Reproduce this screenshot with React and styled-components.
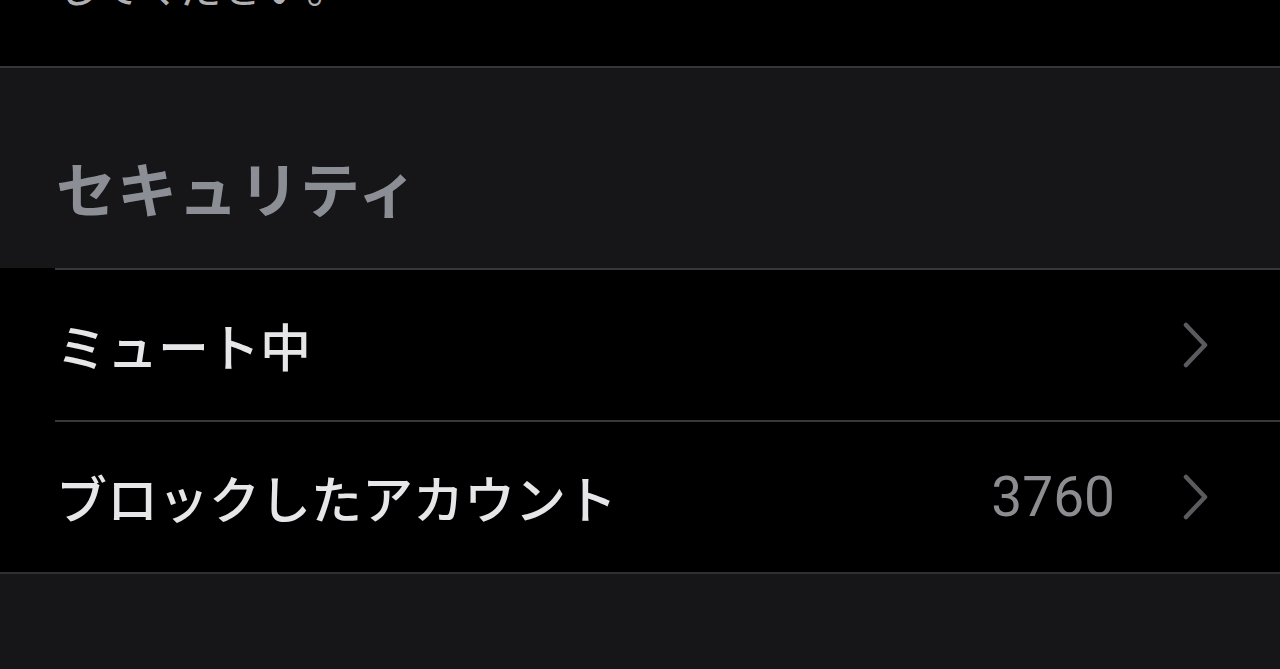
import React from "react";
import styled, { createGlobalStyle } from "styled-components";

const GlobalStyle = createGlobalStyle`
  html, body {
    margin: 0;
    padding: 0;
    background: #161618;
  }
  body {
    font-family: "Noto Sans CJK JP", "Noto Sans", sans-serif;
    -webkit-font-smoothing: antialiased;
  }
`;

const Page = styled.div`
  width: 1280px;
  height: 669px;
  overflow: hidden;
  background: #161618;
  display: flex;
  flex-direction: column;
`;

const TopBlock = styled.div`
  height: 66px;
  background: #000;
  border-bottom: 2px solid #363638;
  overflow: hidden;
  padding-left: 57px;
`;

const Notice = styled.p`
  margin: -45px 0 0;
  font-size: 42px;
  line-height: 60px;
  font-weight: 400;
  color: #b0b0b4;
  white-space: nowrap;
`;

const SectionHeader = styled.h2`
  margin: 0;
  height: 164px;
  padding: 36px 0 0 56px;
  display: flex;
  align-items: center;
  font-size: 60px;
  font-weight: 700;
  color: #8b8e94;
  letter-spacing: 1px;
`;

const List = styled.div`
  background: #000;
  padding-left: 55px;
  border-bottom: 2px solid #303032;
`;

const Row = styled.div`
  height: 150px;
  border-top: 2px solid #38383a;
  display: flex;
  align-items: center;
  padding-left: 1px;
`;

const Label = styled.span`
  flex: 1;
  font-size: 51px;
  font-weight: 500;
  color: #e6e6e8;
  white-space: nowrap;
`;

const Value = styled.span`
  font-family: Roboto, "Liberation Sans", sans-serif;
  font-size: 55px;
  font-weight: 400;
  color: #8c8c91;
  margin-right: 67px;
`;

const Chevron = styled.svg`
  width: 28px;
  height: 46px;
  margin-right: 70px;
  flex-shrink: 0;
`;

const ChevronIcon = () => (
  <Chevron viewBox="0 0 28 46" fill="none">
    <polyline
      points="4,3 23,23 4,43"
      stroke="#5b5b5f"
      strokeWidth="4.5"
      strokeLinecap="round"
      strokeLinejoin="round"
    />
  </Chevron>
);

const rows = [
  { label: "ミュート中" },
  { label: "ブロックしたアカウント", value: "3760" },
];

export default function App() {
  return (
    <>
      <GlobalStyle />
      <Page>
        <TopBlock>
          <Notice>してください。</Notice>
        </TopBlock>
        <SectionHeader>セキュリティ</SectionHeader>
        <List>
          {rows.map((r) => (
            <Row key={r.label}>
              <Label>{r.label}</Label>
              {r.value && <Value>{r.value}</Value>}
              <ChevronIcon />
            </Row>
          ))}
        </List>
      </Page>
    </>
  );
}
